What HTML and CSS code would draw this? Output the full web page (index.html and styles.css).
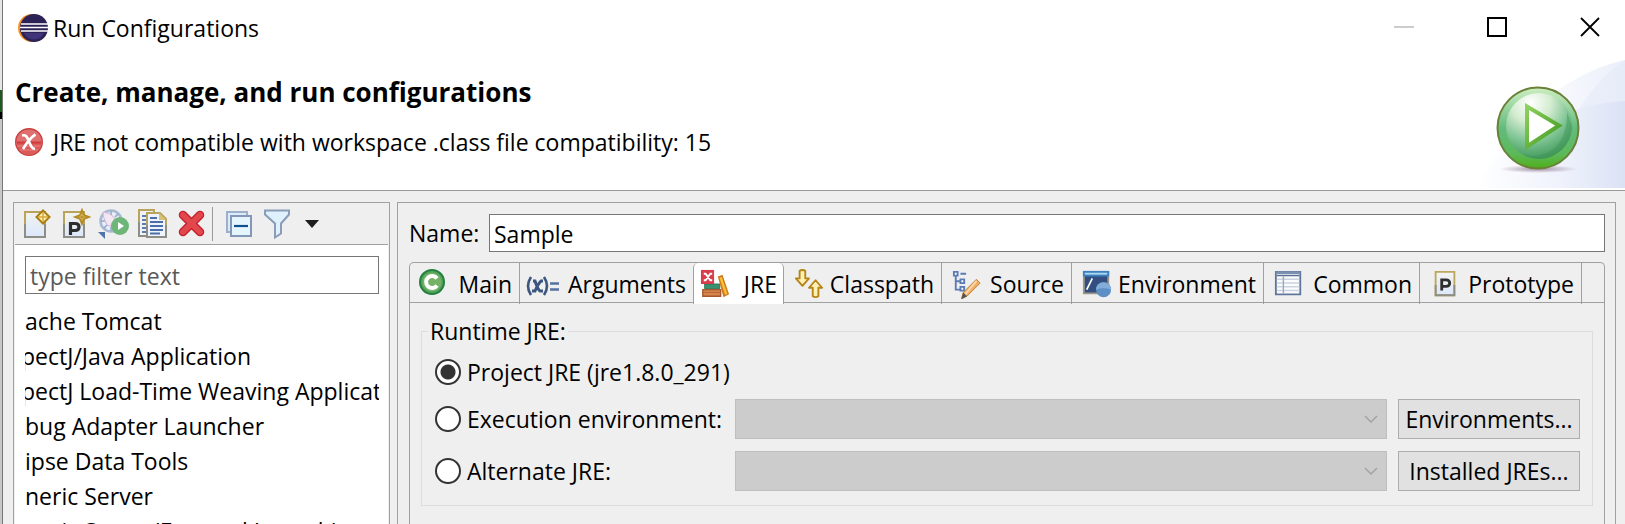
FILE: index.html
```html
<!DOCTYPE html>
<html lang="en">
<head>
<meta charset="utf-8">
<title>Run Configurations</title>
<link rel="stylesheet" href="styles.css">
</head>
<body>
<div class="desktop">
<main class="window">
  <header class="header">
    <svg class="swoosh" viewBox="0 0 150 128" aria-hidden="true">
      <defs>
        <linearGradient id="sw1" x1="0" x2="1"><stop offset="0" stop-color="#fff"/><stop offset=".6" stop-color="#f6f8fd"/><stop offset="1" stop-color="#ebeffa"/></linearGradient>
        <linearGradient id="sw2" x1="0" x2="1"><stop offset="0" stop-color="#fff"/><stop offset=".55" stop-color="#f0f3fc"/><stop offset="1" stop-color="#dbe2f5"/></linearGradient>
      </defs>
      <path d="M0 128C20 80 80 15 150 0V128Z" fill="url(#sw1)"/>
      <path d="M70 128C85 75 112 25 150 0V128Z" fill="#e4eaf8" opacity=".55"/>
      <path d="M0 128C30 80 85 44 150 41V128Z" fill="url(#sw2)"/>
    </svg>
    <div class="titlebar">
      <svg class="logo" viewBox="0 0 30 28" aria-hidden="true">
        <circle cx="14" cy="14" r="14" fill="#f7941e"/>
        <circle cx="16" cy="14" r="14" fill="#2c2255"/>
        <path d="M6 19h20a11 11 0 0 1-20 0z" fill="#41347a"/>
        <path d="M3 10h27M2 13.500h28M3 17h27" stroke="#fff" stroke-width="1.500"/>
      </svg>
      <span class="title">Run Configurations</span>
      <div class="controls">
        <button class="control" aria-label="Minimize"><svg viewBox="0 0 20 20"><path d="M0 10h20" stroke="#ccc" stroke-width="2"/></svg></button>
        <button class="control" aria-label="Maximize"><svg viewBox="0 0 20 20"><path d="M1 1h18v18H1z" fill="none" stroke="#000" stroke-width="2"/></svg></button>
        <button class="control" aria-label="Close"><svg viewBox="0 0 20 20"><path d="M1 1l18 18M19 1L1 19" stroke="#000" stroke-width="1.800"/></svg></button>
      </div>
    </div>
    <div class="banner">
      <div class="messages">
        <h1 class="heading">Create, manage, and run configurations</h1>
        <p class="error">
          <svg class="error-icon" viewBox="0 0 28 28" aria-hidden="true">
            <circle cx="14" cy="14" r="13.300" fill="#e0706f" stroke="#c9413f" stroke-width="1.400"/>
            <path d="M1.500 14h25a12.500 12.500 0 0 1-25 0z" fill="#dc5a59"/>
            <path d="M2 14.500h24" stroke="#cf3b3b" stroke-width="2"/>
            <path d="M2.500 18h23M5 22h18" stroke="#e58483"/>
            <path d="M7 7.500c4-1 5 1 7 6s3 7 6 7.500M20.500 6.500C16 9 11 16 8 21" fill="none" stroke="#fff" stroke-width="2.600"/>
          </svg>
          <span>JRE not compatible with workspace .class file compatibility: 15</span>
        </p>
      </div>
      <svg class="play" viewBox="0 0 84 88" aria-hidden="true">
        <defs>
          <linearGradient id="pg" x1="0" y1="0" x2="0" y2="1"><stop offset="0" stop-color="#cdeec0"/><stop offset=".5" stop-color="#63bb7c"/><stop offset=".82" stop-color="#5cb95a"/><stop offset="1" stop-color="#4fae18"/></linearGradient>
          <radialGradient id="pi" cx=".38" cy=".15" r=".85"><stop offset="0" stop-color="#fff"/><stop offset=".35" stop-color="#d4ecd0"/><stop offset=".7" stop-color="#7cc392"/><stop offset="1" stop-color="#449a5c"/></radialGradient>
          <radialGradient id="ps"><stop offset="0" stop-color="#8f7a90" stop-opacity=".8"/><stop offset="1" stop-color="#8f7a90" stop-opacity="0"/></radialGradient>
          <linearGradient id="pt" x1="0" y1="0" x2="1" y2="1"><stop offset="0" stop-color="#8fd060"/><stop offset="1" stop-color="#3f9a1c"/></linearGradient>
        </defs>
        <ellipse cx="42" cy="83" rx="39" ry="4" fill="url(#ps)"/>
        <circle cx="42" cy="42" r="40.500" fill="url(#pg)" stroke="#6b8038" stroke-width="2"/>
        <circle cx="43" cy="40" r="33" fill="url(#pi)"/>
        <path d="M76 40a33 33 0 0 1-50 28c25 7 46-8 45-42z" fill="#3f9557" opacity=".45"/>
        <path d="M31 20.500v40L63 39.500z" fill="#fff" stroke="url(#pt)" stroke-width="4"/>
      </svg>
    </div>
  </header>

  <div class="body">
    <section class="sidebar">
      <div class="toolbar">
        <button class="tool" aria-label="New configuration"><svg viewBox="0 0 32 32">
          <path d="M4 4h20v25H4z" fill="url(#page)" stroke="#b8a45c" stroke-width="2"/><path d="M4 16v13h20V16" fill="none" stroke="#8d8f86" stroke-width="2"/>
          <path d="M22 2.500l6.500 6.500-6.500 6.500-6.500-6.500z" fill="#fff3b8" stroke="#a87f14" stroke-width="2"/><path d="M22 4v10M17 9h10" stroke="#d8a736" stroke-width="1.500"/>
          <defs><linearGradient id="page" x1="0" y1="0" x2="0" y2="1"><stop offset="0" stop-color="#f3f3f0"/><stop offset="1" stop-color="#dbe7fb"/></linearGradient></defs></svg></button>
        <button class="tool" aria-label="New prototype"><svg viewBox="0 0 32 32">
          <path d="M5 4h20v25H5z" fill="url(#page)" stroke="#b8a45c" stroke-width="2"/><path d="M5 16v13h20V16" fill="none" stroke="#8d8f86" stroke-width="2"/>
          <path d="M11.500 27V15.500h4.500q4 0 4 3.500t-4 3.500h-4" fill="none" stroke="#2d2d2d" stroke-width="3.200"/>
          <path d="M23 2l2 5 5 2-5 2-2 5-2-5-5-2 5-2z" fill="#fff3b8" stroke="#b58a22" stroke-width="1.800"/><path d="M23 4v10M18 9h10" stroke="#b58a22" stroke-width="1.300"/></svg></button>
        <button class="tool" aria-label="Export configuration"><svg viewBox="0 0 32 32">
          <circle cx="14" cy="13" r="10.500" fill="#e9edf5" stroke="#a8b9d4" stroke-width="2.500"/>
          <path d="M14 3v5M24 13h-4M4 13h4M21 6l-3 3M7 20l3-3M14 23v-4" stroke="#91a6c8" stroke-width="1.500"/>
          <path d="M6 4c6 1 12 4 12 9s-7 7-9 2S6 9 6 4z" fill="#f2e6f2" stroke="#cdb6d3"/>
          <circle cx="23" cy="18" r="9" fill="#6db678"/><path d="M21 14v8l6-4z" fill="#fff"/>
          <path d="M1 24h7v7z" fill="#4f74ab"/></svg></button>
        <button class="tool" aria-label="Duplicate"><svg viewBox="-2 0 32 32">
          <path d="M2 2h15v26H2z" fill="#f0f2f6" stroke="#b8a45c" stroke-width="2"/><path d="M2 14v14h14" fill="none" stroke="#8d8f86" stroke-width="2"/>
          <path d="M5 8h5M5 12h5M5 16h5M5 20h5M5 24h5" stroke="#5b7db1" stroke-width="1.800"/>
          <path d="M10 5h13l6 6v18H10z" fill="#eef3fc" stroke="#b8a45c" stroke-width="2"/><path d="M10 17v12h19V17" fill="none" stroke="#8d8f86" stroke-width="2"/><path d="M22 5v7h7z" fill="#d8c174"/>
          <path d="M13 10h7M13 14h13M13 18h13M13 22h13M13 25.500h10" stroke="#4a6ea8" stroke-width="1.800"/></svg></button>
        <button class="tool" aria-label="Delete"><svg viewBox="-3 0 32 32">
          <path d="M7 7l17 17M24 7L7 24" stroke="#c11f2b" stroke-width="8.500" stroke-linecap="round"/><path d="M7 7l17 17M24 7L7 24" stroke="#e2474d" stroke-width="6" stroke-linecap="round"/></svg></button>
        <span class="divider"></span>
        <button class="tool" aria-label="Collapse all"><svg viewBox="-1 0 32 32">
          <path d="M3 4h20v20H3z" fill="#dcebf8" stroke="#9db0cb" stroke-width="2"/><path d="M7 8h20v20H7z" fill="#e5f5fd" stroke="#8597b8" stroke-width="2"/><path d="M10 18h14" stroke="#0d4f91" stroke-width="2.200"/></svg></button>
        <button class="tool" aria-label="Filter"><svg viewBox="-1 0 32 32">
          <path d="M3 2.500h24v4l-8 9v10l-6 4v-14L3 6.500z" fill="#dff1fd" stroke="#8a9cb8" stroke-width="2"/></svg></button>
        <button class="tool" aria-label="Filter menu"><svg viewBox="0 0 32 32"><path d="M6 12h14l-7 8z" fill="#1e1e1e"/></svg></button>
      </div>
      <div class="types">
        <input class="field filter" type="text" placeholder="type filter text" aria-label="Filter configurations">
        <ul class="tree">
          <li>ache Tomcat</li>
          <li class="cut">pectJ/Java Application</li>
          <li class="cut">pectJ Load-Time Weaving Application</li>
          <li>bug Adapter Launcher</li>
          <li>ipse Data Tools</li>
          <li>neric Server</li>
          <li>neric Server(External Launch)</li>
        </ul>
      </div>
    </section>

    <section class="details">
      <div class="name-row">
        <label for="name">Name:</label>
        <input class="field name" id="name" type="text" value="Sample">
      </div>
      <div class="folder">
        <div class="tabs" role="tablist">
          <button class="tab main" role="tab"><svg viewBox="0 0 30 30"><circle cx="14" cy="13" r="12" fill="#53a35c" stroke="#23803f" stroke-width="2"/><circle cx="14" cy="13" r="9.500" fill="#74b266"/><path d="M19 9.500a6 6 0 1 0 0 7" fill="none" stroke="#fff" stroke-width="4"/></svg><span>Main</span></button>
          <button class="tab arguments" role="tab"><svg class="wide" viewBox="0 0 34 30"><path d="M5 8q-6 9 0 18M18 8q6 9 0 18" fill="none" stroke="#3d5680" stroke-width="2.600"/><path d="M7 12h2q3 9 5 10h3M17 12h-2q-3 3-6 10H6" fill="none" stroke="#3d5680" stroke-width="3"/><path d="M24 14.500h9M24 20.500h9" stroke="#5672a0" stroke-width="2.400"/></svg><span>Arguments</span></button>
          <button class="tab selected" role="tab" aria-selected="true"><svg viewBox="0 0 32 30">
            <path d="M5 15h16v5H5z" fill="#38916f" stroke="#267354"/><path d="M3 21h19v7H3z" fill="#d6854c" stroke="#a8572c" stroke-width="1.500"/><path d="M3 24h19" stroke="#b56535"/>
            <path d="M19 7l5-2 7 21-6 3z" fill="#cf7a22"/><path d="M22 8l6 18" stroke="#f6c331" stroke-width="2.500"/>
            <path d="M1 0h14v15H1z" fill="#d93c4a"/><path d="M4 4h2l5 7h2M13 4h-2l-5 7H4" fill="none" stroke="#fff" stroke-width="2"/></svg><span>JRE</span></button>
          <button class="tab" role="tab"><svg viewBox="0 0 32 32"><g fill="#fdf0b4" stroke="#b68518" stroke-width="2" stroke-linejoin="round"><path d="M6 2q3-2 6 0v8h4l-7 8-7-8h4z"/><path d="M20 29v-9h-4l7-8 7 8h-4v9q-3 2-6 0z"/></g></svg><span>Classpath</span></button>
          <button class="tab" role="tab"><svg viewBox="0 0 32 32"><path d="M4 6v16h5M4 13h5M9 5h6" fill="none" stroke="#5b7db5" stroke-width="2"/><path d="M2 3h4v4H2zM9 11h4v4H9zM9 19h4v4H9z" fill="#fff" stroke="#5b7db5" stroke-width="2"/><path d="M26 11l4 4-14 14-6 3 2-7z" fill="#f2ac62" stroke="#b9803e"/><path d="M26 13L14 27" stroke="#fbd9a8" stroke-width="2"/><path d="M12 25l4 4-6 3z" fill="#555"/></svg><span>Source</span></button>
          <button class="tab" role="tab"><svg viewBox="0 0 32 32"><path d="M2 3h26v23H2z" fill="#334f82" stroke="#9a978a" stroke-width="2"/><path d="M1 2h28v6H1z" fill="#3e80bd"/><path d="M3 5h24" stroke="#a9d9f3" stroke-width="2"/><path d="M11 10L5 22" stroke="#fff" stroke-width="1.800"/><circle cx="23" cy="22" r="8" fill="#5b8fc5"/><path d="M15 22a8 8 0 0 1 16 0q-8-3-16 0z" fill="#82add8"/></svg><span>Environment</span></button>
          <button class="tab" role="tab"><svg viewBox="0 0 32 32"><path d="M2 3h26v24H2z" fill="#fafbfd" stroke="#60779c" stroke-width="2"/><path d="M2 4h26" stroke="#7b90b0" stroke-width="3"/><path d="M3 7h24" stroke="#5a7094" stroke-width="1.500"/><path d="M3 11h24M3 15h24M3 19h24M3 23h24" stroke="#ccd3df" stroke-width="1.500"/><path d="M10 8v18" stroke="#9aa8c0" stroke-width="1.500"/></svg><span>Common</span></button>
          <button class="tab" role="tab"><svg viewBox="0 0 32 32"><path d="M6 3h20v25H6z" fill="url(#page)" stroke="#bba85c" stroke-width="2"/><path d="M6 17v11h20V17" fill="none" stroke="#8d8f86" stroke-width="2"/><path d="M12.500 23V11.500h4.500q4 0 4 3.500t-4 3.500h-4" fill="none" stroke="#2d2d2d" stroke-width="3"/></svg><span>Prototype</span></button>
        </div>
        <div class="panel">
          <fieldset class="group">
            <legend>Runtime JRE:</legend>
            <div class="options">
              <label class="option project"><input type="radio" name="jre" checked><span>Project JRE (jre1.8.0_291)</span></label>
              <label class="option"><input type="radio" name="jre"><span>Execution environment:</span></label>
              <div class="combo"><select disabled aria-label="Execution environment"></select><svg viewBox="0 0 14 8" aria-hidden="true"><path d="M1 1l6 6 6-6" fill="none" stroke="#a3a3a3" stroke-width="1.500"/></svg></div>
              <button class="push">Environments...</button>
              <label class="option"><input type="radio" name="jre"><span>Alternate JRE:</span></label>
              <div class="combo"><select disabled aria-label="Alternate JRE"></select><svg viewBox="0 0 14 8" aria-hidden="true"><path d="M1 1l6 6 6-6" fill="none" stroke="#a3a3a3" stroke-width="1.500"/></svg></div>
              <button class="push">Installed JREs...</button>
            </div>
          </fieldset>
        </div>
      </div>
    </section>
  </div>
</main>
</div>
</body>
</html>
```
FILE: styles.css
```css
* { box-sizing: border-box; }

body {
  margin: 0;
  background: #efefef;
  color: #000;
  font: 23px/32px "Open Sans", "Noto Sans", sans-serif;
}

button, input, select {
  margin: 0;
  padding: 0;
  color: inherit;
  font: inherit;
}

svg { display: block; flex: none; }

.desktop {
  height: 100vh;
  padding-left: 2px;
  overflow: hidden;
  background: linear-gradient(#e6e6e6 0 90px, #1e5a1c 90px 112px, #000 112px 119px, #c8c8c8 119px);
}

.window {
  display: flex;
  flex-direction: column;
  height: 100%;
  border-left: 1px solid #777;
  background: #efefef;
}

/* Header */
.header {
  position: relative;
  flex: none;
  padding-bottom: 30px;
  border-bottom: 1px solid #999;
  background: #fff;
}

.swoosh {
  position: absolute;
  right: 0;
  bottom: 2px;
  width: 150px;
  height: 128px;
}

.titlebar {
  position: relative;
  display: flex;
  align-items: center;
  height: 56px;
  padding: 0 25px 0 15px;
}

.logo { width: 30px; height: 28px; }
.title { flex: 1; margin-left: 5px; }
.controls { display: flex; gap: 73px; padding-bottom: 2px; }

.control, .tool {
  padding: 0;
  border: 0;
  background: none;
}

.control svg { width: 20px; height: 20px; }

.banner {
  position: relative;
  display: flex;
  align-items: flex-start;
  justify-content: space-between;
  padding: 20px 45px 0 12px;
}

.heading {
  margin: 0;
  font-size: 26px;
  font-weight: 700;
  line-height: 32px;
}

.error {
  display: flex;
  align-items: center;
  gap: 10px;
  margin: 18px 0 0;
}

.error-icon { width: 28px; height: 28px; }

.play {
  width: 84px;
  height: 88px;
  margin: 10px 0 -14px;
}

/* Body */
.body {
  display: flex;
  flex: 1;
  gap: 7px;
  min-height: 0;
  padding: 11px 9px 0 10px;
}

.sidebar, .details {
  border: 1px solid #a0a0a0;
  border-bottom: 0;
}

.sidebar {
  display: flex;
  flex: none;
  flex-direction: column;
  width: 377px;
  padding: 0 1px;
}

.toolbar {
  display: flex;
  align-items: center;
  gap: 6px;
  height: 42px;
  padding-left: 6px;
  border-bottom: 1px solid #a0a0a0;
}

.tool svg { width: 32px; height: 32px; }

.divider {
  width: 1px;
  height: 34px;
  margin: 0 4px 0 1px;
  background: #999;
}

.types {
  flex: 1;
  min-height: 0;
  padding: 11px 9px 0 10px;
  overflow: hidden;
  background: #fff;
}

.field {
  width: 100%;
  height: 38px;
  padding: 1px 4px 0;
  border: 1px solid #767676;
  border-radius: 0;
  background: #fff;
}

.field::placeholder { color: #595959; opacity: 1; }

.tree {
  margin: 10px 0 0;
  padding: 0;
  overflow: hidden;
  line-height: 35px;
  list-style: none;
  white-space: nowrap;
}

.cut { text-indent: -4px; }

.details {
  display: flex;
  flex: 1;
  flex-direction: column;
  min-width: 0;
  padding: 11px 10px 0 11px;
}

.name-row {
  display: flex;
  align-items: center;
}

.name-row label { flex: none; width: 80px; }

/* Tab folder */
.folder {
  display: flex;
  flex: 1;
  flex-direction: column;
  margin-top: 10px;
  border: 1px solid #a0a0a0;
  border-bottom: 0;
  border-radius: 5px 5px 0 0;
}

.tabs {
  display: grid;
  flex: none;
  grid-template-columns: 110px 173px 91px 158px 130px 192px 156px 162px;
  height: 40px;
  border-bottom: 1px solid #a0a0a0;
}

.tab {
  display: flex;
  align-items: center;
  justify-content: space-between;
  padding: 1px 7px 0 10px;
  border: 0;
  border-right: 1px solid #a0a0a0;
  background: none;
  white-space: nowrap;
}

.tab svg { width: 30px; height: 30px; }
.tab svg.wide { width: 34px; }
.tab.main { padding-left: 8px; }
.tab.arguments { border-right: 0; padding-left: 6px; }

.tab.selected {
  height: 41px;
  padding: 0 6px;
  border-left: 1px solid #a0a0a0;
  border-radius: 5px 5px 0 0;
  background: #fff;
}

.panel { padding: 12px 11px 0 11px; }

.group {
  min-width: 0;
  margin: 0;
  padding: 0 12px 14px 13px;
  border: 1px solid #dcdcdc;
}

.group legend { margin-left: -7px; padding: 0 2px; }

.options {
  display: grid;
  grid-template-columns: 289px 1fr 182px;
  gap: 12px 11px;
  align-items: center;
}

.option {
  display: flex;
  align-items: center;
  gap: 6px;
  white-space: nowrap;
}

.project {
  grid-column: 1 / -1;
  height: 40px;
  padding-top: 10px;
}

.option input {
  flex: none;
  width: 26px;
  height: 26px;
  border: 2px solid #333;
  border-radius: 50%;
  appearance: none;
  background: #fff;
}

.option input:checked { background: radial-gradient(circle, #333 0 7px, #fff 8px); }

.combo { display: grid; align-items: center; }
.combo > * { grid-area: 1 / 1; }

.combo select {
  width: 100%;
  height: 40px;
  border: 1px solid #bfbfbf;
  border-radius: 0;
  appearance: none;
  background: #ccc;
  opacity: 1;
}

.combo svg {
  justify-self: end;
  width: 14px;
  height: 8px;
  margin-right: 9px;
}

.push {
  height: 40px;
  border: 1px solid #adadad;
  background: #e1e1e1;
  white-space: nowrap;
}
```
